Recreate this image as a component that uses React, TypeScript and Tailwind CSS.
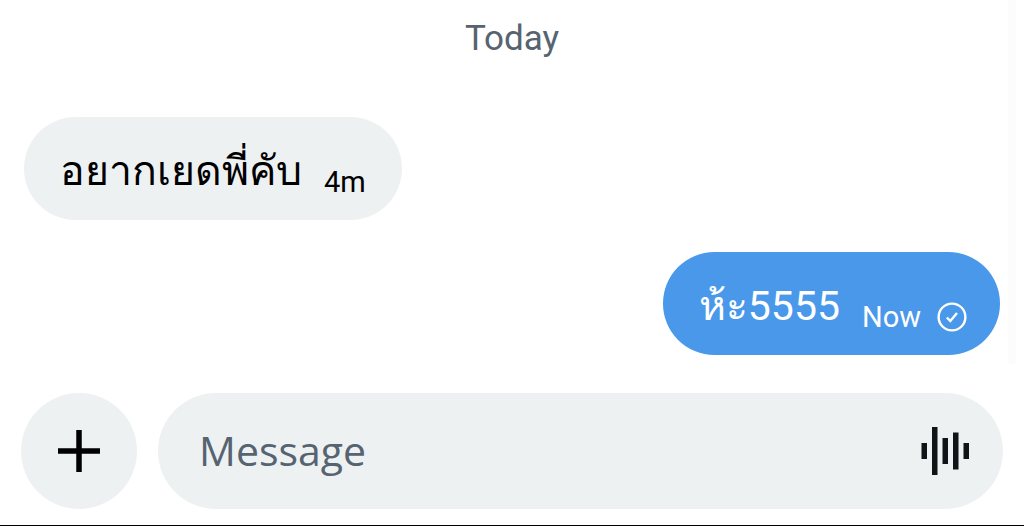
import { useState } from "react";

type Message = {
  id: number;
  text: string;
  time: string;
  mine: boolean;
};

const MESSAGES: Message[] = [
  { id: 1, text: "อยากเยดพี่คับ", time: "4m", mine: false },
  { id: 2, text: "ห้ะ5555", time: "Now", mine: true },
];

export default function App() {
  const [draft, setDraft] = useState("");

  return (
    <div className="flex min-h-screen flex-col border-b border-black bg-white font-['Roboto',sans-serif]">
      <main className="flex flex-1 pr-2">
        <div className="flex-1 pt-4 pr-2 pl-6">
          <h2 className="text-center text-[35px] leading-[45px] text-[#566370]">Today</h2>
          <ul className="mt-14 space-y-8">
            {MESSAGES.map((m) => (
              <MessageBubble key={m.id} message={m} />
            ))}
          </ul>
        </div>
        {/* Scroll track */}
        <div className="mb-2 w-2 rounded-b-full bg-[#fcfcfc]" />
      </main>

      <form onSubmit={(e) => e.preventDefault()} className="flex gap-[21px] pt-[21px] pr-[21px] pb-4 pl-[21px]">
        <button type="button" aria-label="Add attachment" className="flex size-[116px] shrink-0 items-center justify-center rounded-full bg-[#edf1f2] text-black">
          <PlusIcon />
        </button>
        <div className="flex min-w-0 flex-1 items-center rounded-full bg-[#edf1f2] pr-8 pl-[41px]">
          <input
            type="text"
            aria-label="Message"
            placeholder="Message"
            value={draft}
            onChange={(e) => setDraft(e.target.value)}
            className="min-w-0 flex-1 bg-transparent font-['Open_Sans',sans-serif] text-[41px] text-[#0f1419] outline-none placeholder:text-[#566370]"
          />
          <button type="button" aria-label="Record voice message" className="text-[#0f1419]">
            <VoiceIcon />
          </button>
        </div>
      </form>
    </div>
  );
}

function MessageBubble({ message }: { message: Message }) {
  const { text, time, mine } = message;
  return (
    <li className={`flex ${mine ? "justify-end" : "justify-start"}`}>
      <div className={`flex items-center rounded-full pt-6 pb-[19px] ${mine ? "bg-[#4a98e9] pr-[33px] pl-9 text-white" : "bg-[#edf1f2] px-9 text-black"}`}>
        <p className="text-[41px] leading-[60px]">{text}</p>
        <span className="ml-[22px] pt-[22px] text-[29px] leading-9">{time}</span>
        {mine && <SentIcon />}
      </div>
    </li>
  );
}

function PlusIcon() {
  return (
    <svg width="42" height="42" viewBox="0 0 42 42" fill="none" stroke="currentColor" strokeWidth="5.5" aria-hidden="true">
      <path d="M21 0v42M0 21h42" />
    </svg>
  );
}

function VoiceIcon() {
  return (
    <svg width="50" height="48" viewBox="0 0 50 48" fill="currentColor" aria-hidden="true">
      <rect x="0.5" y="16" width="5.5" height="16" />
      <rect x="11" y="0" width="5.5" height="48" />
      <rect x="21.5" y="11" width="5.5" height="26" />
      <rect x="32" y="5.5" width="5.5" height="37" />
      <rect x="42.5" y="16" width="5.5" height="16" />
    </svg>
  );
}

function SentIcon() {
  return (
    <svg width="30" height="30" viewBox="0 0 30 30" fill="none" stroke="currentColor" strokeWidth="2.4" className="mt-[22px] ml-4" role="img" aria-label="Sent">
      <circle cx="15" cy="15" r="13.4" />
      <path d="M9.8 15.5l3.5 3.5L20 11" />
    </svg>
  );
}
